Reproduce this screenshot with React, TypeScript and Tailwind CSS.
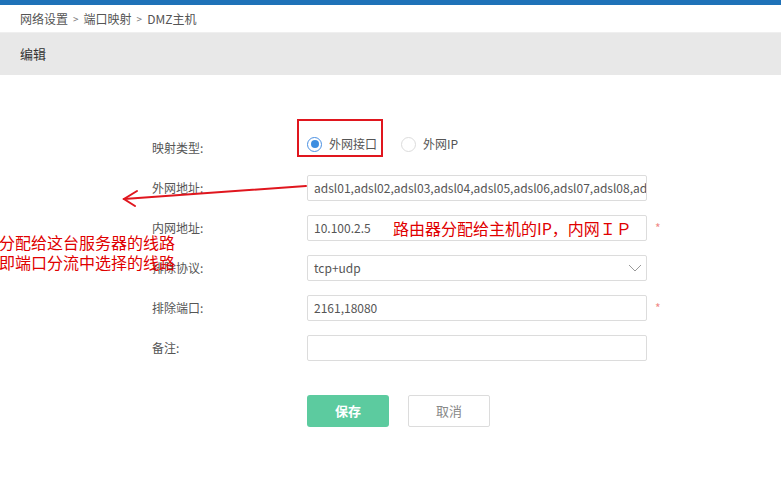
const font = { fontFamily: '"Noto Sans CJK SC", "Noto Sans", sans-serif' };

function Field({ label, children, required }: { label: string; children: React.ReactNode; required?: boolean }) {
  return (
    <div className="flex items-center h-[26px]">
      <div className="w-[155px] text-[12px] text-[#555] leading-none">{label}</div>
      {children}
      {required && <span className="ml-[8px] text-[12px] text-[#f08a8a] leading-none">*</span>}
    </div>
  );
}

function TextBox({ value, children }: { value?: string; children?: React.ReactNode }) {
  return (
    <div className="relative w-[340px] h-[26px] border border-[#dcdcdc] rounded-[2px] bg-white flex items-center pl-[6px] overflow-hidden whitespace-nowrap text-[12px] text-[#555]">
      {value}
      {children}
    </div>
  );
}

export default function App() {
  return (
    <div className="relative w-[781px] h-[493px] bg-white overflow-hidden" style={font}>
      {/* top bar */}
      <div className="h-[5px] bg-[#1f72b8]" />
      <div className="h-[28px] flex items-center px-5 text-[12px] text-[#555] gap-[5px] border-b border-[#efefef]">
        <span>网络设置</span>
        <span className="text-[10px] text-[#777]">&gt;</span>
        <span>端口映射</span>
        <span className="text-[10px] text-[#777]">&gt;</span>
        <span>DMZ主机</span>
      </div>
      <div className="h-[42px] bg-[#e8e8e8] flex items-center px-5 text-[13px] text-[#333]">编辑</div>

      {/* form */}
      <div className="pl-[152px] pt-[60px] flex flex-col gap-[14px]">
        <Field label="映射类型:">
          <div className="relative flex items-center mb-[8px] text-[12px] text-[#555]">
            <span className="w-[15px] h-[15px] rounded-full border border-[#4a90e2] flex items-center justify-center">
              <span className="w-[8px] h-[8px] rounded-full bg-[#3d8ee0]" />
            </span>
            <span className="ml-[7px]">外网接口</span>
            <span className="ml-[24px] w-[15px] h-[15px] rounded-full border border-[#dcdcdc]" />
            <span className="ml-[7px]">外网IP</span>
            <div className="absolute left-[-10px] top-[-16px] w-[86px] h-[38px] border-2 border-[#e0161e]" />
          </div>
        </Field>
        <Field label="外网地址:">
          <TextBox value="adsl01,adsl02,adsl03,adsl04,adsl05,adsl06,adsl07,adsl08,adsl09" />
        </Field>
        <Field label="内网地址:" required>
          <TextBox value="10.100.2.5">
            <span className="absolute left-[85px] top-1/2 -translate-y-1/2 text-[16px] text-[#e00000]">路由器分配给主机的IP，内网ＩＰ</span>
          </TextBox>
        </Field>
        <Field label="排除协议:">
          <div className="w-[340px] h-[26px] border border-[#dcdcdc] rounded-[2px] bg-white flex items-center justify-between pl-[6px] pr-[3px] text-[12px] text-[#555]">
            tcp+udp
            <svg width="14" height="8" viewBox="0 0 14 8" className="mr-[1px]">
              <path d="M1 1 L7 7 L13 1" stroke="#999" strokeWidth="1" fill="none" />
            </svg>
          </div>
        </Field>
        <Field label="排除端口:" required>
          <TextBox value="2161,18080" />
        </Field>
        <Field label="备注:">
          <TextBox />
        </Field>
        <div className="flex gap-[19px] ml-[155px] mt-[20px]">
          <button className="w-[82px] h-[32px] rounded-[3px] bg-[#5ccb9f] text-white text-[13px] font-bold">保存</button>
          <button className="w-[82px] h-[32px] rounded-[2px] border border-[#dcdcdc] bg-white text-[#888] text-[13px]">取消</button>
        </div>
      </div>

      {/* annotations */}
      <div className="absolute left-[-1px] top-[232px] text-[16px] leading-[20px] text-[#e00000]">
        <div>分配给这台服务器的线路</div>
        <div>即端口分流中选择的线路</div>
      </div>
      <svg className="absolute left-0 top-0 pointer-events-none" width="781" height="493">
        <g stroke="#e0161e" strokeWidth="2" fill="none" strokeLinecap="round">
          <path d="M306 186 L124 199" />
          <path d="M137 191 L124 199 L135 206" />
        </g>
      </svg>
    </div>
  );
}
